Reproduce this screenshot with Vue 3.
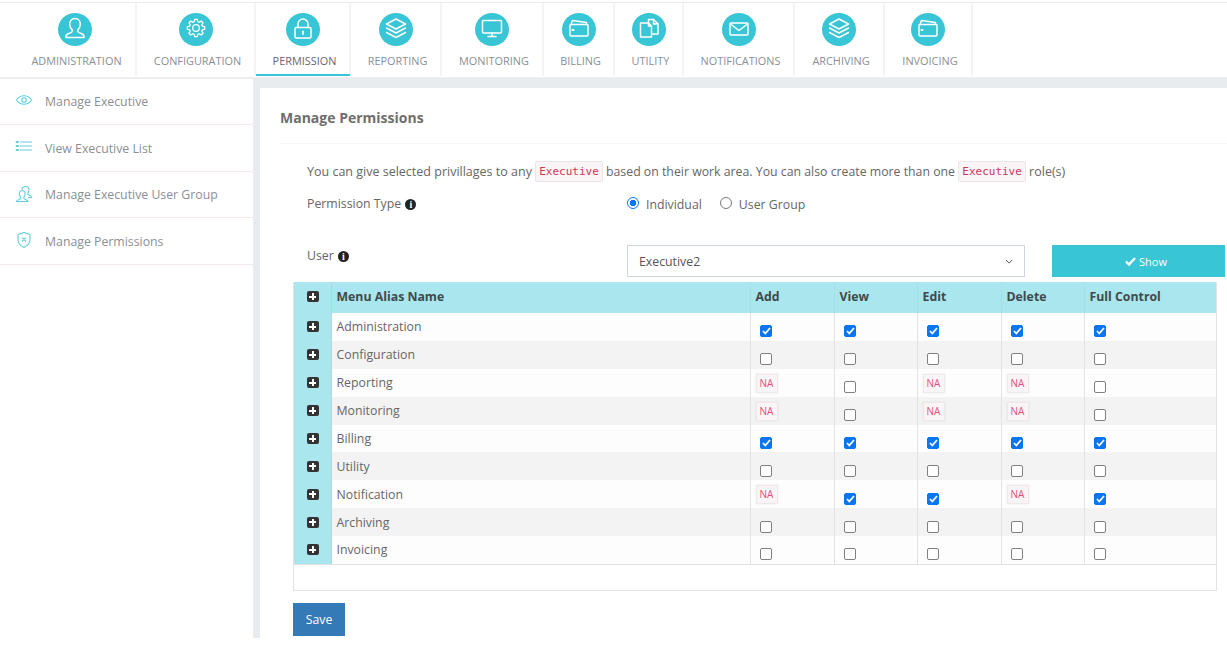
<template>
  <div class="page">
    <nav class="tabs">
      <a
        v-for="tab in tabs"
        :key="tab.label"
        class="tab"
        :class="{ active: tab.active }"
        :style="{ width: tab.width + 'px' }"
      >
        <span class="tab-circle">
          <svg width="30" height="30" viewBox="0 0 30 30" fill="none" stroke="#fff" stroke-width="1.5" stroke-linejoin="round" stroke-linecap="round">
            <template v-if="tab.icon === 'user'">
              <path d="M15 3.500c-3.400 0-5.300 2.600-5.300 5.800 0 2.300 1 4.200 2.500 5.400v1.500c0 .9-.9 1.300-2.200 1.800-2 .7-4 1.400-4 3.200v1.300h18v-1.300c0-1.800-2-2.500-4-3.200-1.300-.5-2.200-.9-2.200-1.800v-1.500c1.500-1.200 2.500-3.100 2.500-5.400 0-3.200-1.900-5.800-5.300-5.800z" />
            </template>
            <template v-else-if="tab.icon === 'gear'">
              <g transform="translate(15 13) scale(.87) translate(-15 -16)">
                <circle cx="15" cy="16" r="3.800" />
                <path d="M13.500 6h3l.5 2.600 1.800.8 2.200-1.500 2.100 2.100-1.500 2.200.8 1.800 2.600.5v3l-2.600.5-.8 1.800 1.500 2.200-2.100 2.100-2.200-1.500-1.800.8-.5 2.600h-3l-.5-2.600-1.800-.8-2.200 1.500-2.100-2.100 1.500-2.200-.8-1.800-2.600-.5v-3l2.600-.5.8-1.800-1.500-2.200 2.100-2.100 2.200 1.500 1.800-.8z" />
              </g>
            </template>
            <template v-else-if="tab.icon === 'lock'">
              <rect x="7" y="12.500" width="16" height="10.500" rx="1.200" />
              <path d="M10 12.500V9a5 5 0 0 1 10 0v3.500" />
              <path d="M15 16.500v2.500" stroke-width="2" />
            </template>
            <template v-else-if="tab.icon === 'layers'">
              <path d="M15 4l9.500 5-9.500 5-9.500-5z" />
              <path d="M5.500 13l9.500 5 9.500-5" />
              <path d="M5.500 17.500l9.500 5 9.500-5" />
            </template>
            <template v-else-if="tab.icon === 'monitor'">
              <rect x="5.500" y="5.500" width="19" height="12.500" rx="1" />
              <path d="M15 18v3M11 21.500h8" />
            </template>
            <template v-else-if="tab.icon === 'wallet'">
              <path d="M7 9.500l1.500-4 14 2v2" />
              <rect x="6" y="9.500" width="18" height="11.500" rx="1" />
              <path d="M8.500 15h1" stroke-width="2" />
            </template>
            <template v-else-if="tab.icon === 'files'">
              <path d="M6.500 8h8l3 3v11h-11z" />
              <path d="M14.500 8v3h3" />
              <path d="M14.500 8V4.500h5l4.500 4.500v10h-6.500" />
              <path d="M19.500 4.500V9H24" />
            </template>
            <template v-else-if="tab.icon === 'mail'">
              <rect x="6" y="8" width="18" height="12" rx="1" />
              <path d="M6.500 9l8.500 6.500L23.500 9" />
            </template>
          </svg>
        </span>
        <span class="tab-label">{{ tab.label }}</span>
      </a>
    </nav>

    <div class="body">
      <aside class="sidebar">
        <a v-for="item in menu" :key="item.label" class="side-item">
          <svg class="side-icon" width="18" height="18" viewBox="0 0 18 18" fill="none" stroke="#5fcfdc" stroke-width="1.100" stroke-linecap="round" stroke-linejoin="round">
            <template v-if="item.icon === 'eye'">
              <path d="M1.500 8c2-3 4.500-4.300 7.500-4.300s5.500 1.300 7.500 4.300c-2 3-4.500 4.300-7.500 4.300S3.500 11 1.500 8z" />
              <circle cx="9" cy="8" r="2.300" />
            </template>
            <template v-else-if="item.icon === 'list'">
              <path d="M1.500 4h1.500M1.500 8h1.500M1.500 12h1.500" stroke-width="1.800" />
              <path d="M5.500 4h11M5.500 8h11M5.500 12h11" />
            </template>
            <template v-else-if="item.icon === 'users'">
              <path d="M7.500 5.500c-2 0-3.200 1.500-3.200 3.400 0 1.400.6 2.500 1.400 3.200v1c0 .6-.5.9-1.300 1.200-1.300.5-2.900 1-2.900 2.200h11.500c0-1.200-1.600-1.700-2.900-2.200-.8-.3-1.300-.6-1.300-1.200v-1c.8-.7 1.400-1.800 1.400-3.200 0-1.900-1.200-3.400-3.200-3.400z" />
              <path d="M7 4c.5-1.600 1.800-2.500 3.500-2.500 2.100 0 3.500 1.500 3.500 3.600 0 1.300-.5 2.300-1.200 3v1c0 .6.4.9 1.200 1.200 1.100.4 2.500.9 2.500 2.200h-3" />
            </template>
            <template v-else>
              <path d="M9 1.500l6 2v5c0 3.700-2.500 6.300-6 8-3.500-1.700-6-4.300-6-8v-5z" />
              <path d="M7.300 6.800l3.400 3.400M10.700 6.800l-3.400 3.400" />
            </template>
          </svg>
          <span>{{ item.label }}</span>
        </a>
      </aside>

      <main class="content">
        <h1 class="title">Manage Permissions</h1>

        <div class="form">
          <p class="intro">
            You can give selected privillages to any <code>Executive</code> <span class="intro-mid">based on their work area. You can also create more than one</span> <code>Executive</code> role(s)
          </p>

          <div class="type-row">
            <div class="field-label type-label">Permission Type <i class="info">i</i></div>
            <div class="radios">
              <label class="radio"><span class="radio-mark checked"></span>Individual</label>
              <label class="radio"><span class="radio-mark"></span>User Group</label>
            </div>
          </div>

          <div class="user-row">
            <div class="field-label">User <i class="info">i</i></div>
            <div class="select">
              <span>Executive2</span>
              <svg width="8" height="5" viewBox="0 0 10 6" fill="none" stroke="#555" stroke-width="1.200"><path d="M1 1l4 4 4-4" /></svg>
            </div>
            <button class="show-btn">
              <svg width="11" height="9" viewBox="0 0 11 9" fill="none" stroke="#fff" stroke-width="2.400"><path d="M1 4.500l3 3 6-6.500" /></svg>
              Show
            </button>
          </div>
        </div>

        <div class="table-wrap">
          <table class="perm">
            <colgroup>
              <col style="width: 37px" />
              <col style="width: 419px" />
              <col style="width: 84px" />
              <col style="width: 83px" />
              <col style="width: 84px" />
              <col style="width: 83px" />
              <col />
            </colgroup>
            <thead>
              <tr>
                <th class="expand"><span class="plus"></span></th>
                <th>Menu Alias Name</th>
                <th v-for="c in columns" :key="c">{{ c }}</th>
              </tr>
            </thead>
            <tbody>
              <tr v-for="row in rows" :key="row.name">
                <td class="expand"><span class="plus"></span></td>
                <td class="name">{{ row.name }}</td>
                <td v-for="(v, i) in row.cells" :key="i" class="cell" :class="{ 'has-na': v === 'na' }">
                  <span v-if="v === 'na'" class="na">NA</span>
                  <span v-else class="check" :class="{ on: v === 1 }">
                    <svg v-if="v === 1" width="9" height="8" viewBox="0 0 9 8" fill="none" stroke="#fff" stroke-width="1.800"><path d="M1 4l2.300 2.500L8 1" /></svg>
                  </span>
                </td>
              </tr>
            </tbody>
          </table>
          <div class="table-foot"></div>
        </div>

        <button class="save">Save</button>
      </main>
    </div>
  </div>
</template>

<script setup>
const tabs = [
  { label: 'ADMINISTRATION', icon: 'user', width: 137 },
  { label: 'CONFIGURATION', icon: 'gear', width: 119 },
  { label: 'PERMISSION', icon: 'lock', width: 95, active: true },
  { label: 'REPORTING', icon: 'layers', width: 91 },
  { label: 'MONITORING', icon: 'monitor', width: 102 },
  { label: 'BILLING', icon: 'wallet', width: 71 },
  { label: 'UTILITY', icon: 'files', width: 69 },
  { label: 'NOTIFICATIONS', icon: 'mail', width: 111 },
  { label: 'ARCHIVING', icon: 'layers', width: 90 },
  { label: 'INVOICING', icon: 'wallet', width: 88 },
]

const menu = [
  { label: 'Manage Executive', icon: 'eye' },
  { label: 'View Executive List', icon: 'list' },
  { label: 'Manage Executive User Group', icon: 'users' },
  { label: 'Manage Permissions', icon: 'shield' },
]

const columns = ['Add', 'View', 'Edit', 'Delete', 'Full Control']

const rows = [
  { name: 'Administration', cells: [1, 1, 1, 1, 1] },
  { name: 'Configuration', cells: [0, 0, 0, 0, 0] },
  { name: 'Reporting', cells: ['na', 0, 'na', 'na', 0] },
  { name: 'Monitoring', cells: ['na', 0, 'na', 'na', 0] },
  { name: 'Billing', cells: [1, 1, 1, 1, 1] },
  { name: 'Utility', cells: [0, 0, 0, 0, 0] },
  { name: 'Notification', cells: ['na', 1, 1, 'na', 1] },
  { name: 'Archiving', cells: [0, 0, 0, 0, 0] },
  { name: 'Invoicing', cells: [0, 0, 0, 0, 0] },
]
</script>

<style>
html, body { margin: 0; background: #fff; }
</style>

<style scoped>
.page {
  width: 1227px;
  height: 645px;
  overflow: hidden;
  font-family: "Open Sans", "Noto Sans", sans-serif;
  color: #666;
  background: #fff;
}
.tabs {
  display: flex;
  align-items: flex-start;
  box-sizing: border-box;
  height: 77px;
  margin-top: 2px;
  border-top: 1px solid #e9ebec;
  border-bottom: 2px solid #eceef0;
}
.tab {
  box-sizing: border-box;
  display: flex;
  flex-direction: column;
  align-items: center;
  border-right: 2px solid #f3f4f5;
  padding-top: 10px;
  height: 73px;
  position: relative;
}
.tab:first-child { padding-left: 14px; }
.tab.active::after {
  content: "";
  position: absolute;
  left: 0;
  right: -1px;
  bottom: 0;
  height: 2px;
  background: #38c5d5;
}
.tab-circle {
  width: 34px;
  height: 33px;
  border-radius: 50%;
  background: #38c5d5;
  display: flex;
  align-items: center;
  justify-content: center;
}
.tab-label {
  margin-top: 7px;
  padding-left: 4px;
  font-size: 10.900px;
  line-height: 16px;
  color: #8a8f94;
  white-space: nowrap;
}
.tab.active .tab-label { color: #6d6470; }

.body {
  display: flex;
  height: 559px;
}
.sidebar {
  box-sizing: border-box;
  width: 254px;
  flex: none;
  border-right: 1px solid #e9ebec;
}
.side-item {
  box-sizing: border-box;
  display: flex;
  align-items: center;
  height: 46px;
  padding-left: 15px;
  border-bottom: 1px solid #f0e8ea;
  margin-bottom: 0.500px;
  font-size: 12.300px;
  color: #8a8f94;
}
.side-icon { margin-right: 12px; margin-top: -2px; }

.content {
  flex: 1;
  min-width: 0;
  border-left: 6px solid #e9ecef;
  border-top: 10px solid #e9ecef;
  padding-left: 33px;
  margin-top: -1px;
  background: #fff;
}
.title {
  margin: 0 0 0 -13px;
  padding: 20px 0 15px;
  font-size: 14px;
  line-height: 20px;
  font-weight: 700;
  color: #6e6e6e;
  border-bottom: 1px solid #f5f5f5;
}
.form { padding-left: 14px; }
.intro {
  margin: 16px 0 0;
  height: 24px;
  font-size: 12.500px;
  line-height: 24px;
  white-space: nowrap;
  color: #666;
}
.intro-mid { font-size: 12.300px; }
code {
  font-family: "DejaVu Sans Mono", monospace;
  font-size: 11px;
  padding: 3px 3px;
  color: #d0355f;
  background: #f9f4f5;
  border: 1px solid #ece6e8;
  border-radius: 2px;
  vertical-align: 1px;
}
.type-row {
  display: flex;
  margin-top: 8px;
  height: 42px;
}
.field-label {
  flex: none;
  box-sizing: border-box;
  width: 320px;
  padding-top: 1px;
  font-size: 12.300px;
  line-height: 20px;
  color: #666;
}
.type-label { padding-top: 2px; }
.info {
  display: inline-block;
  width: 11px;
  height: 11px;
  margin-left: 1px;
  border-radius: 50%;
  background: #222;
  color: #fff;
  font: 700 10px/11px "Liberation Serif", serif;
  text-align: center;
}
.radios { display: flex; gap: 18px; }
.radio {
  display: flex;
  align-items: center;
  height: 24px;
  font-size: 12.300px;
}
.radio-mark {
  box-sizing: border-box;
  width: 12px;
  height: 12px;
  border-radius: 50%;
  border: 1px solid #777;
  margin-right: 7px;
  margin-top: -2px;
}
.radio-mark.checked {
  border: 1px solid #0a75f0;
  background: radial-gradient(circle, #0a75f0 0 3px, #fff 3.500px);
}
.user-row {
  display: flex;
  align-items: flex-start;
  margin-top: 11px;
  height: 37px;
}
.select {
  box-sizing: border-box;
  flex: none;
  width: 398px;
  height: 32px;
  display: flex;
  align-items: center;
  justify-content: space-between;
  padding: 0 11px 0 11px;
  border: 1px solid #ced4dd;
  font-size: 12.300px;
  color: #555;
}
.show-btn {
  flex: none;
  display: flex;
  align-items: center;
  gap: 3px;
  width: 173px;
  height: 32px;
  margin-left: 27px;
  padding: 0 0 0 73px;
  border: 0;
  background: #38c5d5;
  color: #fff;
  font: 11px "Open Sans", sans-serif;
}
.table-wrap {
  width: 924px;
  box-sizing: border-box;
  border: 1px solid #e3e3e3;
  border-top: 0;
}
.perm {
  width: 100%;
  table-layout: fixed;
  border-collapse: collapse;
}
.perm th {
  box-sizing: border-box;
  height: 31px;
  padding: 0 5px 2px;
  background: #aae6ed;
  text-align: left;
  font-size: 12.300px;
  font-weight: 700;
  color: #404a4c;
  border-left: 1px solid #b9dde2;
}
.perm th:nth-child(n+3) { border-left: 1px solid #a3e0e8; }
.perm td {
  height: 27.900px;
  padding: 0 5px;
  box-sizing: border-box;
  font-size: 12.300px;
  color: #666;
}
.perm tbody tr:nth-child(even) td { background: #f3f3f3; }
.perm tbody tr:nth-child(odd) td { background: #fdfdfd; }
.perm th.expand {
  padding: 0 0 2px 1px;
}
.perm th.expand,
.perm td.expand {
  background: #aae6ed !important;
  text-align: center;
  border-left: 0;
  border-right: 1px solid #b9d3d8;
}
.perm td.expand { padding: 0 0 0 1px; }
.perm td.cell {
  border-left: 1px solid #e3e3e3;
  padding: 9px 0 0 9.500px;
}
.perm td.cell.has-na { padding-top: 1px; }
.perm tbody tr:last-child td { border-bottom: 1px solid #e0e0e0; }
.plus {
  display: block;
  margin: 0 auto;
  width: 12px;
  height: 11px;
  border-radius: 2px;
  background:
    linear-gradient(#fff, #fff) center / 7px 2px no-repeat,
    linear-gradient(#fff, #fff) center / 2px 7px no-repeat,
    #333;
}
.check {
  display: flex;
  align-items: center;
  justify-content: center;
  box-sizing: border-box;
  width: 12px;
  height: 12px;
  border-radius: 2px;
  border: 1px solid #808080;
  background: #fff;
}
.check.on {
  border-color: #0a75f0;
  background: #0a75f0;
}
.na {
  display: block;
  box-sizing: border-box;
  width: 22px;
  height: 19px;
  margin-left: -4.500px;
  font-size: 10px;
  line-height: 17px;
  text-align: center;
  color: #e0507c;
  background: #f9f5f6;
  border: 1px solid #eee8e9;
  box-shadow: 0 0 2px rgba(0, 0, 0, 0.08);
}
.table-foot { height: 25px; }
.save {
  display: block;
  width: 52px;
  height: 33px;
  margin-top: 12px;
  border: 0;
  background: #337ab7;
  color: #fff;
  font: 12.300px "Open Sans", sans-serif;
}
</style>
